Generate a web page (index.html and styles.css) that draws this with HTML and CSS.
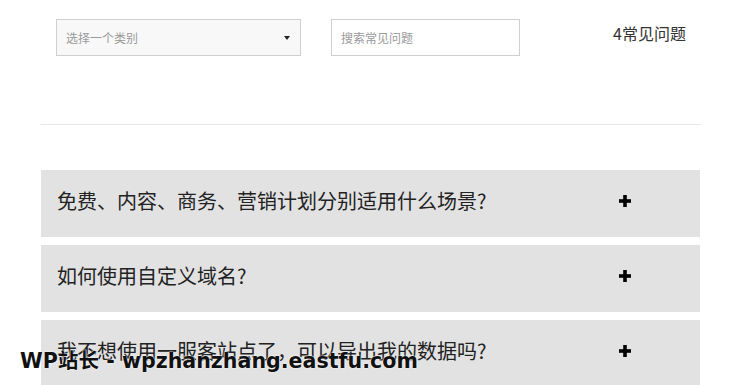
FILE: index.html
```html
<!DOCTYPE html>
<html lang="zh-CN">
<head>
<meta charset="utf-8">
<link rel="stylesheet" href="styles.css">
</head>
<body>
<div class="page">
  <div class="toolbar">
    <div class="select">
      <span class="placeholder">选择一个类别</span>
      <span class="caret"></span>
    </div>
    <div class="search"><span class="placeholder">搜索常见问题</span></div>
    <div class="count">4常见问题</div>
  </div>
  <div class="rule"></div>
  <div class="faq">
    <div class="item"><span class="q">免费、内容、商务、营销计划分别适用什么场景?</span><svg class="plus" width="12" height="12" viewBox="0 0 12 12"><rect x="4.2" y="0" width="3.6" height="12" fill="#000"/><rect x="0" y="4.2" width="12" height="3.6" fill="#000"/></svg></div>
    <div class="item"><span class="q">如何使用自定义域名?</span><svg class="plus" width="12" height="12" viewBox="0 0 12 12"><rect x="4.2" y="0" width="3.6" height="12" fill="#000"/><rect x="0" y="4.2" width="12" height="3.6" fill="#000"/></svg></div>
    <div class="item"><span class="q">我不想使用一服客站点了，可以导出我的数据吗?</span><svg class="plus" width="12" height="12" viewBox="0 0 12 12"><rect x="4.2" y="0" width="3.6" height="12" fill="#000"/><rect x="0" y="4.2" width="12" height="3.6" fill="#000"/></svg></div>
  </div>
</div>
<div class="watermark">WP站长 - wpzhanzhang.eastfu.com</div>
</body>
</html>
```
FILE: styles.css
```css
html, body {
  margin: 0;
  padding: 0;
  background: #fff;
  overflow: hidden;
}
body {
  font-family: "Noto Sans CJK SC", "Noto Sans", sans-serif;
  color: #222;
  width: 738px;
  height: 385px;
  position: relative;
}
.page {
  padding-left: 41px;
  width: 660px;
}
.toolbar {
  display: flex;
  align-items: flex-start;
  padding-top: 19px;
  padding-left: 15px;
}
.select {
  box-sizing: border-box;
  width: 245px;
  height: 37px;
  border: 1px solid #cfcfcf;
  background: #f8f8f8;
  display: flex;
  align-items: center;
  justify-content: space-between;
  padding: 0 10px 0 9px;
}
.placeholder {
  font-size: 12px;
  color: #9a9a9a;
}
.caret {
  width: 0;
  height: 0;
  border-left: 3.5px solid transparent;
  border-right: 3.5px solid transparent;
  border-top: 4px solid #222;
}
.search {
  box-sizing: border-box;
  width: 189px;
  height: 37px;
  margin-left: 30px;
  border: 1px solid #cfcfcf;
  background: #fff;
  display: flex;
  align-items: center;
  padding-left: 9px;
}
.count {
  margin-left: 93px;
  margin-top: 3px;
  font-size: 16px;
  line-height: 22px;
  color: #333;
}
.rule {
  margin-top: 68px;
  height: 1px;
  background: #e6e6e6;
}
.faq {
  margin-top: 45px;
  display: flex;
  flex-direction: column;
  gap: 8px;
  width: 659px;
}
.item {
  box-sizing: border-box;
  height: 67px;
  background: #e2e2e2;
  display: flex;
  align-items: center;
  justify-content: space-between;
  padding: 0 69px 5px 16px;
}
.q {
  font-size: 20px;
  line-height: 28px;
  color: #222;
}
.plus {
  display: block;
  flex: none;
}
.watermark {
  position: absolute;
  left: 20px;
  top: 348px;
  font-family: "DejaVu Sans", "Noto Sans CJK SC", sans-serif;
  font-weight: bold;
  font-size: 20.6px;
  line-height: 26px;
  color: #111;
  white-space: nowrap;
  text-shadow: 0 0 2px #fff, 0 0 1px #fff;
}
```
